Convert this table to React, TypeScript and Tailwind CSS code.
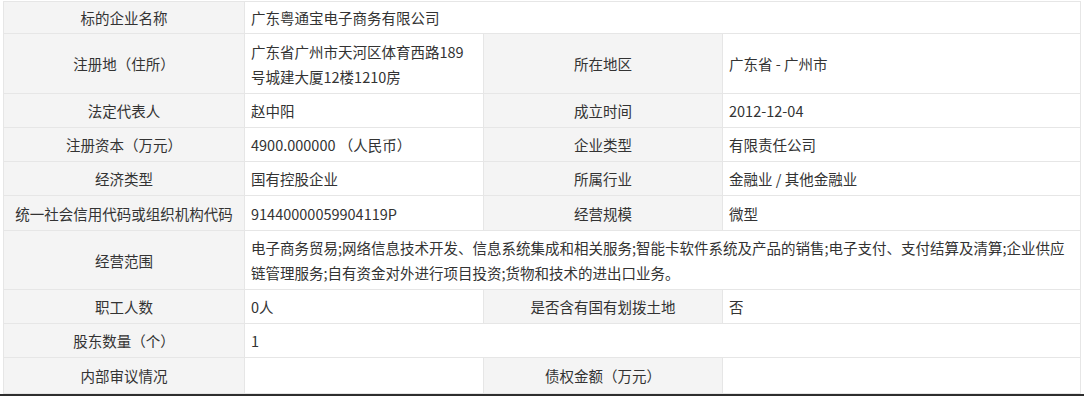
import React from "react";

type Row = {
  h: string;
  cells: { text: string; label?: boolean; span?: boolean }[];
};

const rows: Row[] = [
  {
    h: "h-[32px]",
    cells: [
      { text: "标的企业名称", label: true },
      { text: "广东粤通宝电子商务有限公司", span: true },
    ],
  },
  {
    h: "h-[60px]",
    cells: [
      { text: "注册地（住所）", label: true },
      { text: "广东省广州市天河区体育西路189号城建大厦12楼1210房" },
      { text: "所在地区", label: true },
      { text: "广东省 - 广州市" },
    ],
  },
  {
    h: "h-[34px]",
    cells: [
      { text: "法定代表人", label: true },
      { text: "赵中阳" },
      { text: "成立时间", label: true },
      { text: "2012-12-04" },
    ],
  },
  {
    h: "h-[34px]",
    cells: [
      { text: "注册资本（万元）", label: true },
      { text: "4900.000000 （人民币）" },
      { text: "企业类型", label: true },
      { text: "有限责任公司" },
    ],
  },
  {
    h: "h-[34px]",
    cells: [
      { text: "经济类型", label: true },
      { text: "国有控股企业" },
      { text: "所属行业", label: true },
      { text: "金融业 / 其他金融业" },
    ],
  },
  {
    h: "h-[35px]",
    cells: [
      { text: "统一社会信用代码或组织机构代码", label: true },
      { text: "91440000059904119P" },
      { text: "经营规模", label: true },
      { text: "微型" },
    ],
  },
  {
    h: "h-[59px]",
    cells: [
      { text: "经营范围", label: true },
      {
        text: "电子商务贸易;网络信息技术开发、信息系统集成和相关服务;智能卡软件系统及产品的销售;电子支付、支付结算及清算;企业供应链管理服务;自有资金对外进行项目投资;货物和技术的进出口业务。",
        span: true,
      },
    ],
  },
  {
    h: "h-[34px]",
    cells: [
      { text: "职工人数", label: true },
      { text: "0人" },
      { text: "是否含有国有划拨土地", label: true },
      { text: "否" },
    ],
  },
  {
    h: "h-[34px]",
    cells: [
      { text: "股东数量（个）", label: true },
      { text: "1", span: true },
    ],
  },
  {
    h: "h-[36px]",
    cells: [
      { text: "内部审议情况", label: true },
      { text: "" },
      { text: "债权金额（万元）", label: true },
      { text: "" },
    ],
  },
];

export default function App() {
  return (
    <div className="w-[1084px] h-[396px] bg-white overflow-hidden text-[#333] text-[14.5px] leading-[25px] font-['Noto_Sans_CJK_SC','Noto_Sans',sans-serif]">
      <div className="ml-[3px] mt-[1px] w-[1078px] grid grid-cols-[241px_239px_239px_358px] border-t border-l border-[#e6e6e6]">
        {rows.map((row, i) =>
          row.cells.map((c, j) => (
            <div
              key={`${i}-${j}`}
              className={`${row.h} flex items-center border-r border-b border-[#e6e6e6] ${
                c.label
                  ? "bg-[#f4f4f4] justify-center text-center px-2"
                  : "bg-white pl-[6px] pr-[8px]"
              } ${c.span ? "col-span-3" : ""}`}
            >
              <span>{c.text}</span>
            </div>
          ))
        )}
      </div>
      <div className="h-[4px] bg-[#2e2e2e]" />
    </div>
  );
}
